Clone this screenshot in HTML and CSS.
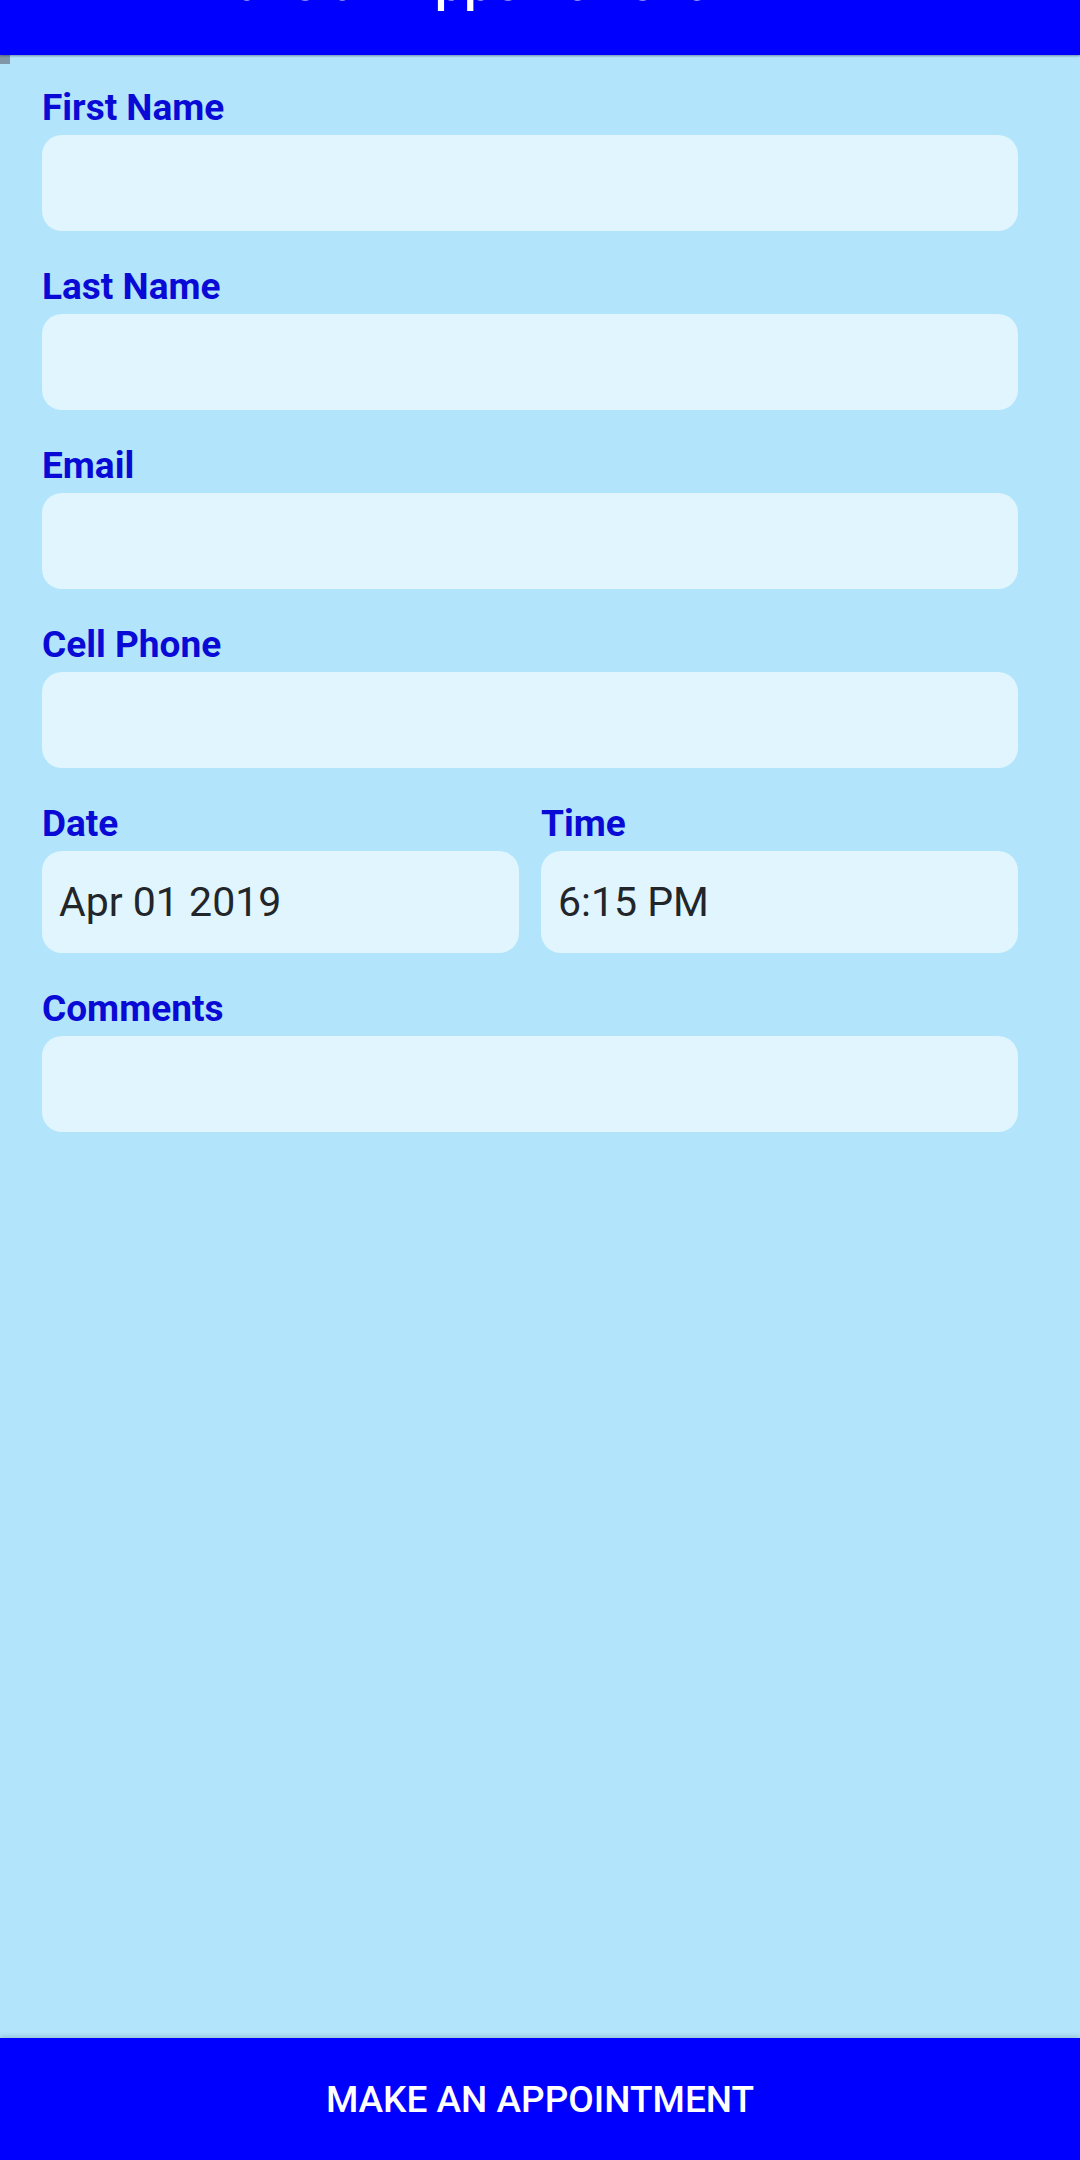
FILE: index.html
```html
<!DOCTYPE html>
<html lang="en">
<head>
    <meta charset="UTF-8">
    <meta name="viewport" content="width=device-width, initial-scale=1.0">
    <title>Make an Appointment</title>
    <link rel="stylesheet" href="styles.css">
</head>
<body>
    <header class="toolbar">
        <h1 class="toolbar-title">Make an Appointment</h1>
    </header>

    <main class="form">
        <div class="field">
            <label for="first-name">First Name</label>
            <input id="first-name" type="text">
        </div>
        <div class="field">
            <label for="last-name">Last Name</label>
            <input id="last-name" type="text">
        </div>
        <div class="field">
            <label for="email">Email</label>
            <input id="email" type="email">
        </div>
        <div class="field">
            <label for="phone">Cell Phone</label>
            <input id="phone" type="tel">
        </div>
        <div class="field-row">
            <div class="field">
                <label for="date">Date</label>
                <input id="date" class="picker" type="text" value="Apr 01 2019" readonly>
            </div>
            <div class="field">
                <label for="time">Time</label>
                <input id="time" class="picker" type="text" value="6:15 PM" readonly>
            </div>
        </div>
        <div class="field">
            <label for="comments">Comments</label>
            <input id="comments" type="text">
        </div>
    </main>

    <button class="submit-button">Make an Appointment</button>
</body>
</html>
```

FILE: styles.css
```css
body {
    font-family: Roboto, 'Liberation Sans', Arial, sans-serif;
    margin: 0;
    background-color: #b2e5fc;
    display: flex;
    flex-direction: column;
    min-height: 100vh;
}

.toolbar {
    height: 55px;
    background-color: #0000ff;
    overflow: hidden;
    box-shadow: 0 1px 2px rgba(0, 0, 60, 0.4);
    position: relative;
    z-index: 1;
}

.toolbar-title {
    margin: -43px 0 0 0;
    padding-left: 190px;
    font-size: 52px;
    line-height: 52px;
    font-weight: 500;
    color: white;
}

.form {
    flex: 1;
    padding: 32px 62px 0 42px;
    position: relative;
}

.form::before {
    content: '';
    position: absolute;
    left: 0;
    top: 0;
    width: 10px;
    height: 9px;
    background-color: #8197a8;
}

.field {
    margin-bottom: 35px;
}

.field label {
    display: block;
    font-size: 37px;
    line-height: 42px;
    font-weight: 700;
    color: #0a0ad6;
    margin-bottom: 6px;
}

.field input {
    display: block;
    box-sizing: border-box;
    width: 100%;
    height: 96px;
    border: none;
    border-radius: 20px;
    background-color: #e0f5fd;
    padding: 0 17px;
    font-family: Roboto, 'Liberation Sans', Arial, sans-serif;
    font-size: 41px;
    color: #222529;
    outline: none;
}

.field input.picker {
    height: 102px;
}

.field-row {
    display: grid;
    grid-template-columns: 1fr 1fr;
    column-gap: 22px;
}

.submit-button {
    height: 122px;
    border: none;
    background-color: #0000ff;
    color: white;
    font-family: Roboto, 'Liberation Sans', Arial, sans-serif;
    font-size: 37px;
    font-weight: 500;
    text-transform: uppercase;
    box-shadow: 0 -2px 5px rgba(0, 0, 0, 0.15);
    cursor: pointer;
}
```
